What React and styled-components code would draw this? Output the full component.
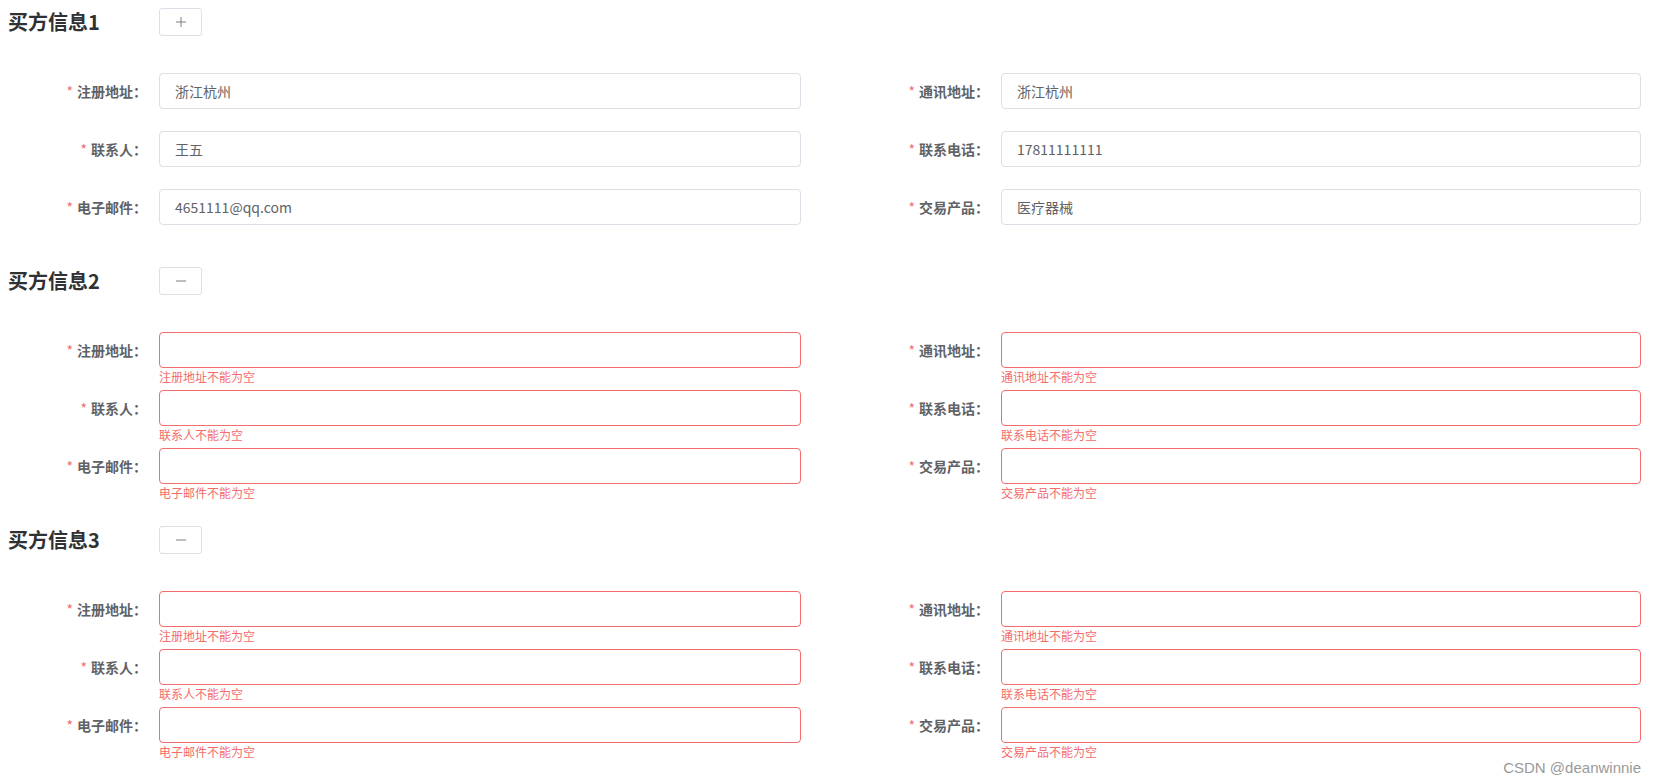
import React from 'react';
import styled, { createGlobalStyle } from 'styled-components';

const GlobalStyle = createGlobalStyle`
  body {
    margin: 0;
    background: #ffffff;
    font-family: "Noto Sans CJK SC", "Noto Sans", sans-serif;
  }
`;

const fields = [
  { key: 'regAddr', label: '注册地址' },
  { key: 'mailAddr', label: '通讯地址' },
  { key: 'contact', label: '联系人' },
  { key: 'phone', label: '联系电话' },
  { key: 'email', label: '电子邮件' },
  { key: 'product', label: '交易产品' }
];

const buyers = [
  {
    title: '买方信息1',
    action: 'plus',
    values: {
      regAddr: '浙江杭州',
      mailAddr: '浙江杭州',
      contact: '王五',
      phone: '17811111111',
      email: '4651111@qq.com',
      product: '医疗器械'
    }
  },
  { title: '买方信息2', action: 'minus', values: {} },
  { title: '买方信息3', action: 'minus', values: {} }
];

function ActionIcon({ type }) {
  return (
    <svg width="10" height="10" viewBox="0 0 10 10">
      <line x1="0" y1="5" x2="10" y2="5" stroke="#7d7f84" strokeWidth="1" />
      {type === 'plus' && (
        <line x1="5" y1="0" x2="5" y2="10" stroke="#7d7f84" strokeWidth="1" />
      )}
    </svg>
  );
}

function BuyerSection({ buyer }) {
  return (
    <Section>
      <Header>
        <Title>{buyer.title}</Title>
        <IconButton>
          <ActionIcon type={buyer.action} />
        </IconButton>
      </Header>
      <FieldGrid>
        {fields.map((f) => {
          const value = buyer.values[f.key] || '';
          const invalid = value === '';
          return (
            <React.Fragment key={f.key}>
              <Label>
                <Star>*</Star>
                {f.label}：
              </Label>
              <Control>
                <Input value={value} readOnly $invalid={invalid} />
                {invalid && <ErrorText>{f.label}不能为空</ErrorText>}
              </Control>
            </React.Fragment>
          );
        })}
      </FieldGrid>
    </Section>
  );
}

export default function App() {
  return (
    <>
      <GlobalStyle />
      <Page>
        {buyers.map((b) => (
          <BuyerSection key={b.title} buyer={b} />
        ))}
        <Watermark>CSDN @deanwinnie</Watermark>
      </Page>
    </>
  );
}

const Page = styled.div`
  position: relative;
  width: 1656px;
  height: 784px;
  box-sizing: border-box;
  padding: 8px 0 0 8px;
  overflow: hidden;
`;

const Section = styled.section`
  margin-bottom: 42px;
`;

const Header = styled.div`
  display: flex;
  align-items: center;
  height: 28px;
  margin-bottom: 37px;
`;

const Title = styled.h3`
  margin: 0;
  width: 151px;
  font-size: 20px;
  font-weight: 700;
  color: #303133;
  line-height: 28px;
`;

const IconButton = styled.button`
  width: 43px;
  height: 28px;
  padding: 0;
  display: flex;
  align-items: center;
  justify-content: center;
  background: #ffffff;
  border: 1px solid #dcdfe6;
  border-radius: 3px;
  cursor: pointer;
`;

const FieldGrid = styled.div`
  display: grid;
  grid-template-columns: 151px 642px 200px 640px;
  grid-auto-rows: 36px;
  row-gap: 22px;
`;

const Label = styled.label`
  display: flex;
  align-items: center;
  justify-content: flex-end;
  padding-right: 12px;
  font-size: 14px;
  font-weight: 700;
  color: #606266;
`;

const Star = styled.span`
  color: #f56c6c;
  font-weight: 400;
  margin-right: 4px;
`;

const Control = styled.div`
  position: relative;
`;

const Input = styled.input`
  box-sizing: border-box;
  width: 100%;
  height: 36px;
  padding: 0 15px;
  border: 1px solid ${(p) => (p.$invalid ? '#f56c6c' : '#dcdfe6')};
  border-radius: 4px;
  outline: none;
  font-family: "Noto Sans CJK SC", "Noto Sans", sans-serif;
  font-size: 14px;
  color: #606266;
  background: #ffffff;
`;

const ErrorText = styled.div`
  position: absolute;
  top: 100%;
  left: 0;
  padding-top: 3px;
  font-size: 12px;
  line-height: 1;
  color: #f56c6c;
`;

const Watermark = styled.div`
  position: absolute;
  right: 15px;
  bottom: 8px;
  font-family: "Liberation Sans", Arial, sans-serif;
  font-size: 15px;
  color: #9a9a9a;
`;
